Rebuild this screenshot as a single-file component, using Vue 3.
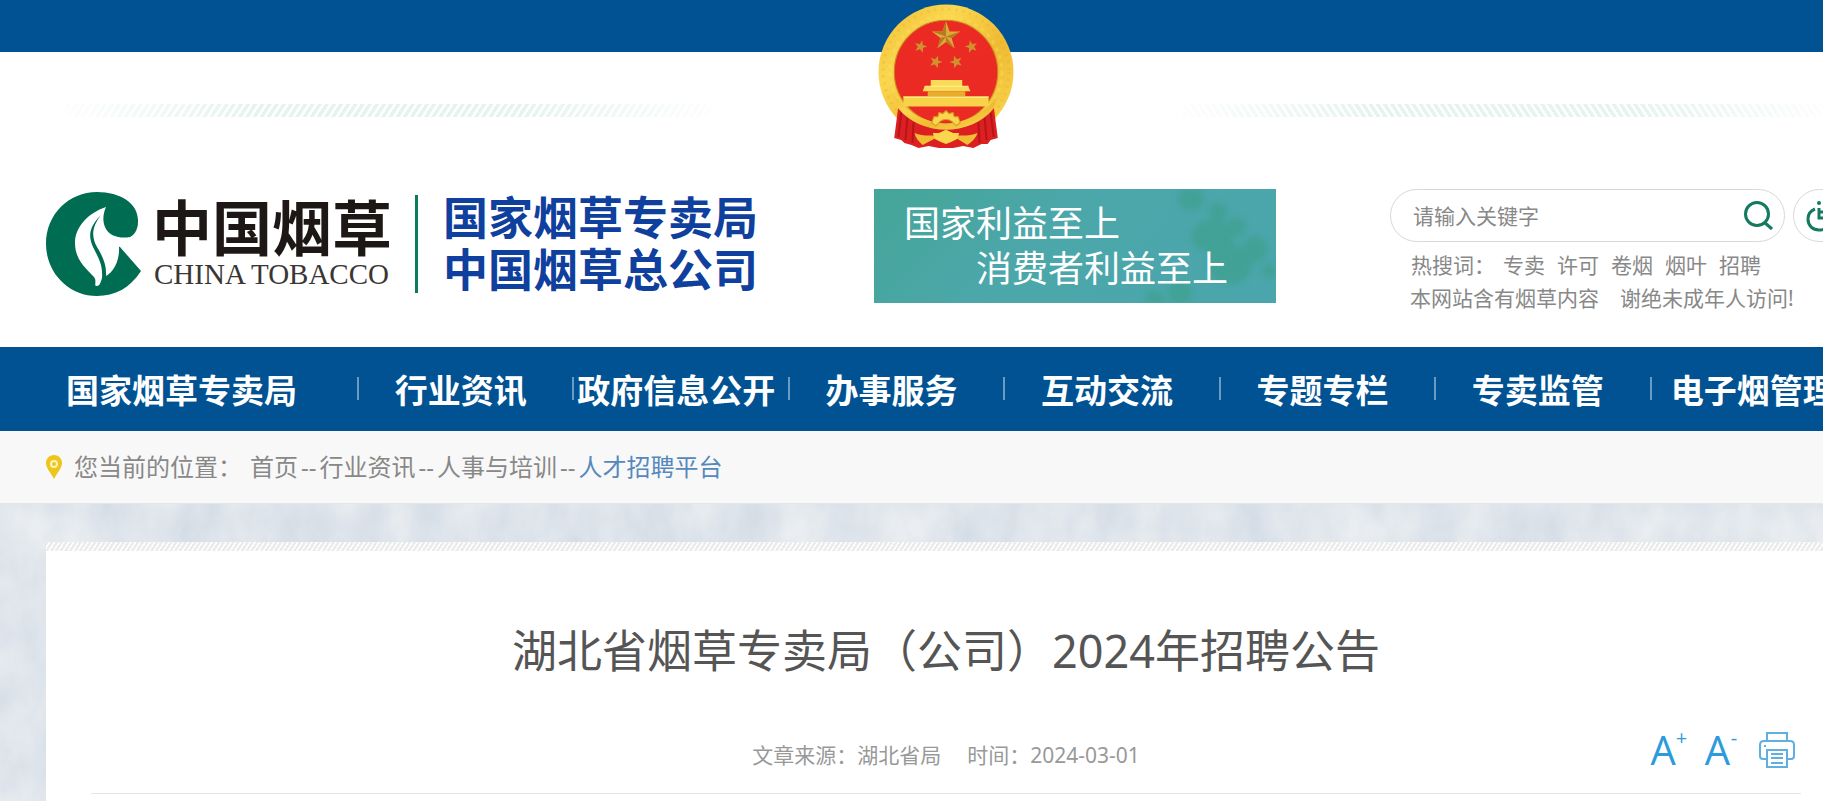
<script setup>
import { ref } from 'vue';

const keyword = ref('');

const hotWords = ['专卖', '许可', '卷烟', '烟叶', '招聘'];

const navItems = [
  '国家烟草专卖局',
  '行业资讯',
  '政府信息公开',
  '办事服务',
  '互动交流',
  '专题专栏',
  '专卖监管',
  '电子烟管理',
];

const crumbs = ['首页', '行业资讯', '人事与培训', '人才招聘平台'];

// small stars on the emblem: x, y and rotation
const stars = [
  { x: 42, y: 42, r: 15 },
  { x: 92, y: 42, r: -15 },
  { x: 57, y: 57, r: 20 },
  { x: 77, y: 57, r: -20 },
];
</script>

<template>
  <div class="page">
    <header class="header">
      <div class="top-bar"></div>

      <svg class="emblem" viewBox="0 0 134 143" aria-hidden="true">
        <defs>
          <linearGradient id="gold" x1="0" y1="0" x2="1" y2="1">
            <stop offset="0" stop-color="#f0bd35" />
            <stop offset="0.3" stop-color="#fad74f" />
            <stop offset="0.6" stop-color="#efba32" />
            <stop offset="1" stop-color="#fbdc55" />
          </linearGradient>
        </defs>
        <circle cx="67" cy="67" r="66.500" fill="url(#gold)" />
        <circle cx="67" cy="67" r="62" fill="none" stroke="#e3a827" stroke-width="3" stroke-dasharray="2 5" opacity="0.3" />
        <circle cx="67" cy="67" r="55" fill="none" stroke="#ffe673" stroke-width="3" stroke-dasharray="4 4" opacity="0.3" />
        <circle cx="67" cy="67" r="51" fill="#ec2a24" stroke="#c98a1c" stroke-width="1" />
        <path d="M20 101 C28 113 45 122 67 123 C89 122 106 113 114 101 L118 132 L111 134 L108 138 L102 138 L94 142 L84 140 L74 142 L60 142 L50 140 L40 142 L33 139 L26 137 L23 134 L16 132 Z" fill="#dc1f20" />
        <path d="M23 107 L20 131 M29 112 L27 134 M35 116 L34 137 M111 107 L114 131 M105 112 L107 134 M99 116 L100 137" stroke="#b8141a" stroke-width="2" />
        <path d="M16 90 C27 107 47 117 67 118 C87 117 107 107 118 90 L114 103 C103 117 84 124 67 124 C50 124 31 117 20 103 Z" fill="url(#gold)" />
        <path d="M36 127 C46 131 57 130 67 127 C77 130 88 131 98 127 C96 133 92 136 88 139 L77 132 L67 137 L57 132 L44 139 C40 135 37 132 36 127 Z" fill="#f0bd35" />
        <path d="M54 127 L60 127 L67 124 L74 127 L80 127 L78 133 L72 136 L67 138 L62 136 L56 133 Z" fill="#f9d64d" />
        <path d="M53 117 L55 111 L59 111 L60 107 L64 108 L67 105 L70 108 L74 107 L75 111 L79 111 L81 117 L77 120 L73 116 C70 113 64 113 61 116 L57 120 Z" fill="#f9d64d" stroke="#d39b22" stroke-width="1" />
        <path d="M52 75 H83 V81 H89 L91 86 H44 L46 81 H52 Z" fill="#fadb57" />
        <path d="M49 86 H86 V91 H49 Z" fill="#e8ad2c" />
        <path d="M25 91 H109 V101 H25 Z" fill="#f8d34a" />
        <path d="M46 81 H89 M25 92 H109" stroke="#fff09a" stroke-width="1" />
        <path d="M67 17 L70.500 27 L81 27 L72.500 33.500 L75.500 43.500 L67 37.500 L58.500 43.500 L61.500 33.500 L53 27 L63.500 27 Z" fill="#e0aa38" />
        <path d="M67 17 L67 32 L63.500 27 Z M81 27 L67 32 L72.500 33.500 Z M75.500 43.500 L67 32 L67 37.500 Z M58.500 43.500 L67 32 L61.500 33.500 Z M53 27 L67 32 L63.500 27 Z" fill="#b47a24" />
        <path
          v-for="star in stars"
          :key="star.x"
          d="M0 -6.500 L1.600 -2.100 L6.200 -2 L2.600 0.800 L3.900 5.300 L0 2.700 L-3.900 5.300 L-2.600 0.800 L-6.200 -2 L-1.600 -2.100 Z"
          :transform="`translate(${star.x} ${star.y}) rotate(${star.r})`"
          fill="#cf922c"
        />
      </svg>

      <div class="stripes">
        <div class="stripe stripe-left"></div>
        <div class="stripe stripe-right"></div>
      </div>

      <div class="header-main">
        <a class="brand" href="#">
          <svg class="brand-mark" viewBox="0 0 95 104" aria-hidden="true">
            <path d="M95 79 C84 96 69 104 51 104 C22 104 0 80 0 52 C0 22 23 0 51 0 C75 0 93 12 92 30 C92 38 88 44 82 46 L62 46 L74 55 Z" fill="#006c52" />
            <path d="M60 15 C42 21 29 35 29 51 C29 69 42 78 48 85 C51 89 48 93 50 94 C54 95 55 89 56 86 C66 83 74 70 73 55 L84 45 C74 47 64 44 60 37 C56 30 57 22 60 15 Z" fill="#fff" />
            <path d="M55 23 C43 35 42 44 47 55 C53 67 57 73 56 87 L60 86 C61 73 57 65 51 55 C45 44 46 35 55 23 Z" fill="#006c52" />
          </svg>
          <span class="brand-name">
            <strong>中国烟草</strong>
            <em>CHINA TOBACCO</em>
          </span>
          <span class="brand-divider"></span>
          <span class="brand-org">
            <span>国家烟草专卖局</span>
            <span>中国烟草总公司</span>
          </span>
        </a>

        <div class="banner">
          <svg class="banner-leaves" viewBox="0 0 130 114" aria-hidden="true">
            <g fill="#3ea08d" opacity="0.700">
              <ellipse cx="45" cy="10" rx="13" ry="11" />
              <ellipse cx="72" cy="23" rx="9" ry="9" />
              <ellipse cx="66" cy="47" rx="21" ry="16" />
              <ellipse cx="90" cy="38" rx="10" ry="9" />
              <ellipse cx="84" cy="75" rx="22" ry="20" />
              <ellipse cx="109" cy="60" rx="12" ry="13" />
              <ellipse cx="34" cy="104" rx="12" ry="12" />
              <ellipse cx="8" cy="112" rx="10" ry="10" />
              <ellipse cx="124" cy="82" rx="8" ry="7" />
            </g>
          </svg>
          <p>国家利益至上</p>
          <p class="banner-second">消费者利益至上</p>
        </div>

        <div class="search-area">
          <div class="search-row">
            <form class="search" @submit.prevent>
              <input v-model="keyword" type="text" placeholder="请输入关键字" aria-label="请输入关键字" />
              <button type="submit" aria-label="搜索">
                <svg viewBox="0 0 30 30" aria-hidden="true">
                  <circle cx="13" cy="13" r="11.500" />
                  <path d="M20 21 L28 28" />
                </svg>
              </button>
            </form>
            <button class="access" type="button" aria-label="无障碍">
              <svg viewBox="0 0 30 34" aria-hidden="true">
                <circle class="head" cx="13" cy="4" r="2" />
                <path d="M13 9 V19 H22 L26 28 M13 13 H21 M9 10 C4 12 2 16 2 20 C2 27 7 31 13 31 C18 31 22 28 23 24" />
              </svg>
            </button>
          </div>
          <p class="hot">
            <span class="hot-label">热搜词：</span>
            <a v-for="word in hotWords" :key="word" href="#">{{ word }}</a>
          </p>
          <p class="notice">本网站含有烟草内容　谢绝未成年人访问!</p>
        </div>
      </div>
    </header>

    <nav class="nav">
      <a v-for="item in navItems" :key="item" href="#">{{ item }}</a>
    </nav>

    <div class="crumbs">
      <svg viewBox="0 0 16 24" aria-hidden="true">
        <path d="M8 0 C3 0 0 4 0 8 C0 13 5 18 8 24 C11 18 16 13 16 8 C16 4 13 0 8 0 Z" fill="#edc51b" />
        <circle cx="8" cy="9" r="3" fill="none" stroke="#fff3c0" stroke-width="2" />
      </svg>
      <span class="crumbs-label">您当前的位置：</span>
      <template v-for="(crumb, i) in crumbs" :key="crumb">
        <span v-if="i > 0" class="dashes">--</span>
        <a href="#" :class="{ current: i === crumbs.length - 1 }">{{ crumb }}</a>
      </template>
    </div>

    <main class="content">
      <svg class="texture" aria-hidden="true">
        <filter id="marble" x="0" y="0" width="100%" height="100%" color-interpolation-filters="sRGB">
          <feTurbulence type="fractalNoise" baseFrequency="0.022 0.014" numOctaves="5" seed="8" />
          <feColorMatrix values="0.14 0 0 0 0.805  0.11 0 0 0 0.843  0.07 0 0 0 0.888  0 0 0 0 1" />
        </filter>
        <rect width="100%" height="100%" filter="url(#marble)" />
      </svg>
      <article class="card">
        <h1>湖北省烟草专卖局（公司）2024年招聘公告</h1>
        <div class="meta">
          <p>
            <span>文章来源：湖北省局</span>
            <span>时间：2024-03-01</span>
          </p>
          <div class="tools">
            <button type="button" aria-label="放大字体">A<sup>+</sup></button>
            <button type="button" aria-label="缩小字体">A<sup>-</sup></button>
            <button type="button" aria-label="打印">
              <svg viewBox="0 0 36 36" aria-hidden="true">
                <path d="M8 9 V1 H28 V9 M7 27 H4 C2 27 1 26 1 24 V13 C1 10 2 9 5 9 H31 C34 9 35 10 35 13 V24 C35 26 34 27 32 27 H29 M8 18 H28 V35 H8 Z M5 14 H7" />
                <path d="M12 22 H24 M12 26 H24 M12 31 H24" />
              </svg>
            </button>
          </div>
        </div>
      </article>
    </main>
  </div>
</template>

<style>
body {
  margin: 0;
  background: #fff;
}
</style>

<style scoped>
.page {
  font-family: "Noto Sans", "Noto Sans CJK SC", sans-serif;
  font-size: 21px;
  color: #888;
  overflow: hidden;
}

p,
h1 {
  margin: 0;
}

a {
  color: inherit;
  text-decoration: none;
}

button {
  padding: 0;
  border: 0;
  background: none;
  font-family: inherit;
  cursor: pointer;
}

svg {
  display: block;
}

/* header */
.header {
  position: relative;
  min-width: 1892px;
  padding-bottom: 32px;
}

.top-bar {
  height: 52px;
  background: #005293;
}

.emblem {
  position: absolute;
  top: 4px;
  left: 50%;
  width: 136px;
  margin-left: -68px;
}

.stripes {
  display: flex;
  justify-content: space-between;
  margin: 52px 46px 0;
}

.stripe {
  width: 684px;
  height: 13px;
  mask-image: linear-gradient(90deg, transparent, #000 30%, #000 70%, transparent);
}

.stripe-left {
  background: repeating-linear-gradient(123deg, #e6f4f0 0 3px, #fff 4px 6px);
}

.stripe-right {
  background: repeating-linear-gradient(57deg, #e6f4f0 0 3px, #fff 4px 6px);
}

.header-main {
  display: grid;
  grid-template-columns: 828px 516px 1fr;
  align-items: start;
  margin: 72px 46px 0;
}

.brand {
  display: flex;
  align-items: center;
  padding-top: 3px;
}

.brand-mark {
  width: 95px;
  height: 104px;
}

.brand-name {
  display: flex;
  flex-direction: column;
  width: 240px;
  margin-left: 11px;
  color: #1d1815;
}

.brand-name strong {
  font-size: 60px;
  line-height: 60px;
}

.brand-name em {
  padding-left: 2px;
  font-family: "Liberation Serif", serif;
  font-size: 29px;
  line-height: 32px;
  font-style: normal;
  color: #3a3634;
  white-space: nowrap;
}

.brand-divider {
  width: 3px;
  height: 98px;
  margin: 0 25px 0 23px;
  background: #0c7a5c;
}

.brand-org {
  display: flex;
  flex-direction: column;
  font-size: 45px;
  line-height: 52px;
  font-weight: bold;
  color: #0f409e;
}

.banner {
  position: relative;
  width: 402px;
  box-sizing: border-box;
  padding: 12px 30px;
  overflow: hidden;
  background: linear-gradient(135deg, #45a598, #4ba7a9 40%, #4aa6ac);
  color: #fff;
  font-size: 36px;
  line-height: 45px;
}

.banner p {
  position: relative;
}

.banner-second {
  padding-left: 72px;
}

.banner-leaves {
  position: absolute;
  top: 0;
  right: 0;
  width: 130px;
  height: 114px;
  filter: blur(3px);
}

.search-row {
  display: flex;
  gap: 8px;
}

.search {
  display: flex;
  align-items: center;
  width: 395px;
  height: 53px;
  box-sizing: border-box;
  padding: 0 10px 0 22px;
  border: 1px solid #d8d8d8;
  border-radius: 27px;
}

.search input {
  flex: 1;
  min-width: 0;
  padding: 0;
  border: 0;
  outline: none;
  background: none;
  font-family: inherit;
  font-size: 21px;
  color: #666;
}

.search input::placeholder {
  color: #888;
  opacity: 1;
}

.search svg {
  width: 30px;
  height: 30px;
  fill: none;
  stroke: #14795e;
  stroke-width: 3;
}

.access {
  width: 150px;
  height: 53px;
  flex: none;
  padding-left: 12px;
  border: 1px solid #d8d8d8;
  border-radius: 27px;
}

.access svg {
  width: 30px;
  height: 34px;
  fill: none;
  stroke: #14795e;
  stroke-width: 3;
}

.access .head {
  fill: #14795e;
  stroke: none;
}

.hot {
  display: flex;
  gap: 12px;
  margin-top: 7px;
  padding-left: 21px;
  line-height: 33px;
}

.hot-label {
  margin-right: -4px;
}

.notice {
  padding-left: 20px;
  line-height: 33px;
  white-space: nowrap;
}

/* main navigation */
.nav {
  display: grid;
  grid-template-columns: 343px repeat(7, 1fr);
  min-width: 1892px;
  height: 84px;
  box-sizing: border-box;
  padding: 0 25px 0 16px;
  background: #005293;
}

.nav a {
  position: relative;
  padding: 4px 12px 0 0;
  text-align: center;
  font-size: 33px;
  line-height: 80px;
  font-weight: bold;
  color: #fff;
  white-space: nowrap;
}

.nav a:not(:last-child)::after {
  content: "";
  position: absolute;
  top: 30px;
  right: 0;
  width: 2px;
  height: 23px;
  background: #6c9bc2;
}

/* breadcrumb */
.crumbs {
  display: flex;
  align-items: center;
  height: 72px;
  padding-left: 46px;
  border-bottom: 1px solid #e4e6e8;
  background: #f8f8f8;
  font-size: 24px;
  line-height: 36px;
}

.crumbs svg {
  width: 16px;
  height: 24px;
  margin-right: 12px;
}

.crumbs-label {
  margin-right: 8px;
}

.dashes {
  padding: 0 3px;
}

.crumbs .current {
  color: #5688bd;
}

/* article */
.content {
  position: relative;
  padding: 38px 46px 0;
  background: #e1e6ec;
}

.texture {
  position: absolute;
  top: 0;
  left: 0;
  width: 100%;
  height: 100%;
}

.card {
  position: relative;
  min-width: 1800px;
  min-height: 259px;
  box-sizing: border-box;
  padding: 71px 45px 0;
  background: repeating-linear-gradient(123deg, #ebebeb 0 2px, #fff 3px 4px) top / 100% 9px no-repeat #fff;
}

h1 {
  text-align: center;
  font-size: 45px;
  line-height: 76px;
  font-weight: normal;
  color: #555;
}

.meta {
  display: grid;
  grid-template-columns: 1fr auto 1fr;
  align-items: start;
  margin-top: 35px;
  padding-bottom: 6px;
  border-bottom: 1px solid #e5e5e5;
  line-height: 63px;
  color: #999;
}

.meta p {
  grid-column: 2;
  display: flex;
  gap: 26px;
}

.tools {
  display: flex;
  justify-content: flex-end;
  align-items: center;
  gap: 21px;
  height: 52px;
  padding-right: 6px;
}

.tools button {
  display: flex;
  font-family: "Open Sans", sans-serif;
  font-size: 40px;
  line-height: 40px;
  font-weight: 500;
  color: #2b9bdc;
}

.tools sup {
  width: 8px;
  font-size: 20px;
  line-height: 16px;
}

.tools svg {
  width: 36px;
  height: 36px;
  fill: none;
  stroke: #5fb0e0;
  stroke-width: 2;
}
</style>
